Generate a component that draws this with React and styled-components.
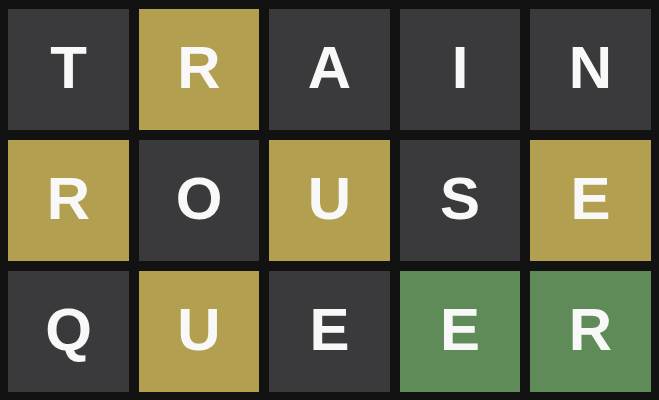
import React from "react";
import styled, { createGlobalStyle } from "styled-components";

const Global = createGlobalStyle`
  html, body { margin: 0; padding: 0; background: #121213; }
  body { width: 659px; height: 400px; overflow: hidden; }
`;

const Board = styled.div`
  box-sizing: border-box;
  width: 659px;
  height: 400px;
  padding: 9px 8px 8px 8px;
  display: grid;
  grid-template-columns: repeat(5, 1fr);
  grid-auto-rows: 121px;
  column-gap: 9.6px;
  row-gap: 10px;
  background: #121213;
`;

const colors = {
  absent: "#3a3a3c",
  present: "#b29f4f",
  correct: "#5e8b57",
};

const Tile = styled.div`
  background: ${(p) => colors[p.$state]};
  display: flex;
  align-items: center;
  justify-content: center;
  color: #f8f8f8;
  font-family: "Liberation Sans", Arial, sans-serif;
  font-weight: 700;
  font-size: 60px;
  line-height: 1;
  padding-bottom: 3px;
  box-sizing: border-box;
`;

const rows = [
  [["T", "absent"], ["R", "present"], ["A", "absent"], ["I", "absent"], ["N", "absent"]],
  [["R", "present"], ["O", "absent"], ["U", "present"], ["S", "absent"], ["E", "present"]],
  [["Q", "absent"], ["U", "present"], ["E", "absent"], ["E", "correct"], ["R", "correct"]],
];

export default function App() {
  return (
    <>
      <Global />
      <Board>
        {rows.flat().map(([l, s], i) => (
          <Tile key={i} $state={s}>{l}</Tile>
        ))}
      </Board>
    </>
  );
}
